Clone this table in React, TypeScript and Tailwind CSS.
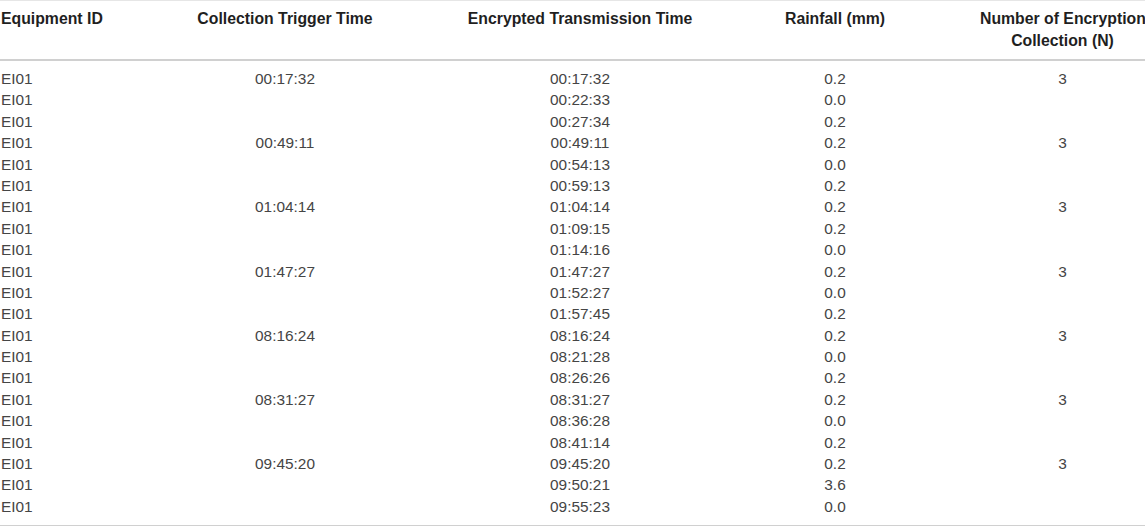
const rows: [string, string, string, string][] = [
  ["00:17:32", "00:17:32", "0.2", "3"],
  ["", "00:22:33", "0.0", ""],
  ["", "00:27:34", "0.2", ""],
  ["00:49:11", "00:49:11", "0.2", "3"],
  ["", "00:54:13", "0.0", ""],
  ["", "00:59:13", "0.2", ""],
  ["01:04:14", "01:04:14", "0.2", "3"],
  ["", "01:09:15", "0.2", ""],
  ["", "01:14:16", "0.0", ""],
  ["01:47:27", "01:47:27", "0.2", "3"],
  ["", "01:52:27", "0.0", ""],
  ["", "01:57:45", "0.2", ""],
  ["08:16:24", "08:16:24", "0.2", "3"],
  ["", "08:21:28", "0.0", ""],
  ["", "08:26:26", "0.2", ""],
  ["08:31:27", "08:31:27", "0.2", "3"],
  ["", "08:36:28", "0.0", ""],
  ["", "08:41:14", "0.2", ""],
  ["09:45:20", "09:45:20", "0.2", "3"],
  ["", "09:50:21", "3.6", ""],
  ["", "09:55:23", "0.0", ""],
];

const cols = "grid grid-cols-[190px_190px_400px_110px_255px]";

export default function App() {
  return (
    <div
      className="w-[1145px] h-[528px] overflow-hidden bg-white text-[15.4px]"
      style={{ fontFamily: '"Liberation Sans", Arial, sans-serif' }}
    >
      {/* header */}
      <div
        className={`${cols} border-t border-[#e6e6e6] border-b-2 border-b-[#d0d0d0] pt-[7px] pb-[8px] leading-[21.5px] text-[15.8px] font-bold text-[#1f1f1f] items-start`}
      >
        <div className="pl-px whitespace-nowrap">Equipment ID</div>
        <div className="text-center whitespace-nowrap">Collection Trigger Time</div>
        <div className="text-center whitespace-nowrap">Encrypted Transmission Time</div>
        <div className="text-center whitespace-nowrap">Rainfall (mm)</div>
        <div className="pl-[90px] text-center whitespace-nowrap">
          Number of Encryption
          <br />
          Collection (N)
        </div>
      </div>

      {/* body */}
      <div className="pt-[7px] pb-[8px] border-b border-[#d0d0d0] text-[#454545]">
        {rows.map((r, i) => (
          <div key={i} className={`${cols} h-[21.4px] leading-[21.4px]`}>
            <div className="pl-px">EI01</div>
            <div className="text-center">{r[0]}</div>
            <div className="text-center">{r[1]}</div>
            <div className="text-center">{r[2]}</div>
            <div className="pl-[90px] text-center">{r[3]}</div>
          </div>
        ))}
      </div>
    </div>
  );
}
